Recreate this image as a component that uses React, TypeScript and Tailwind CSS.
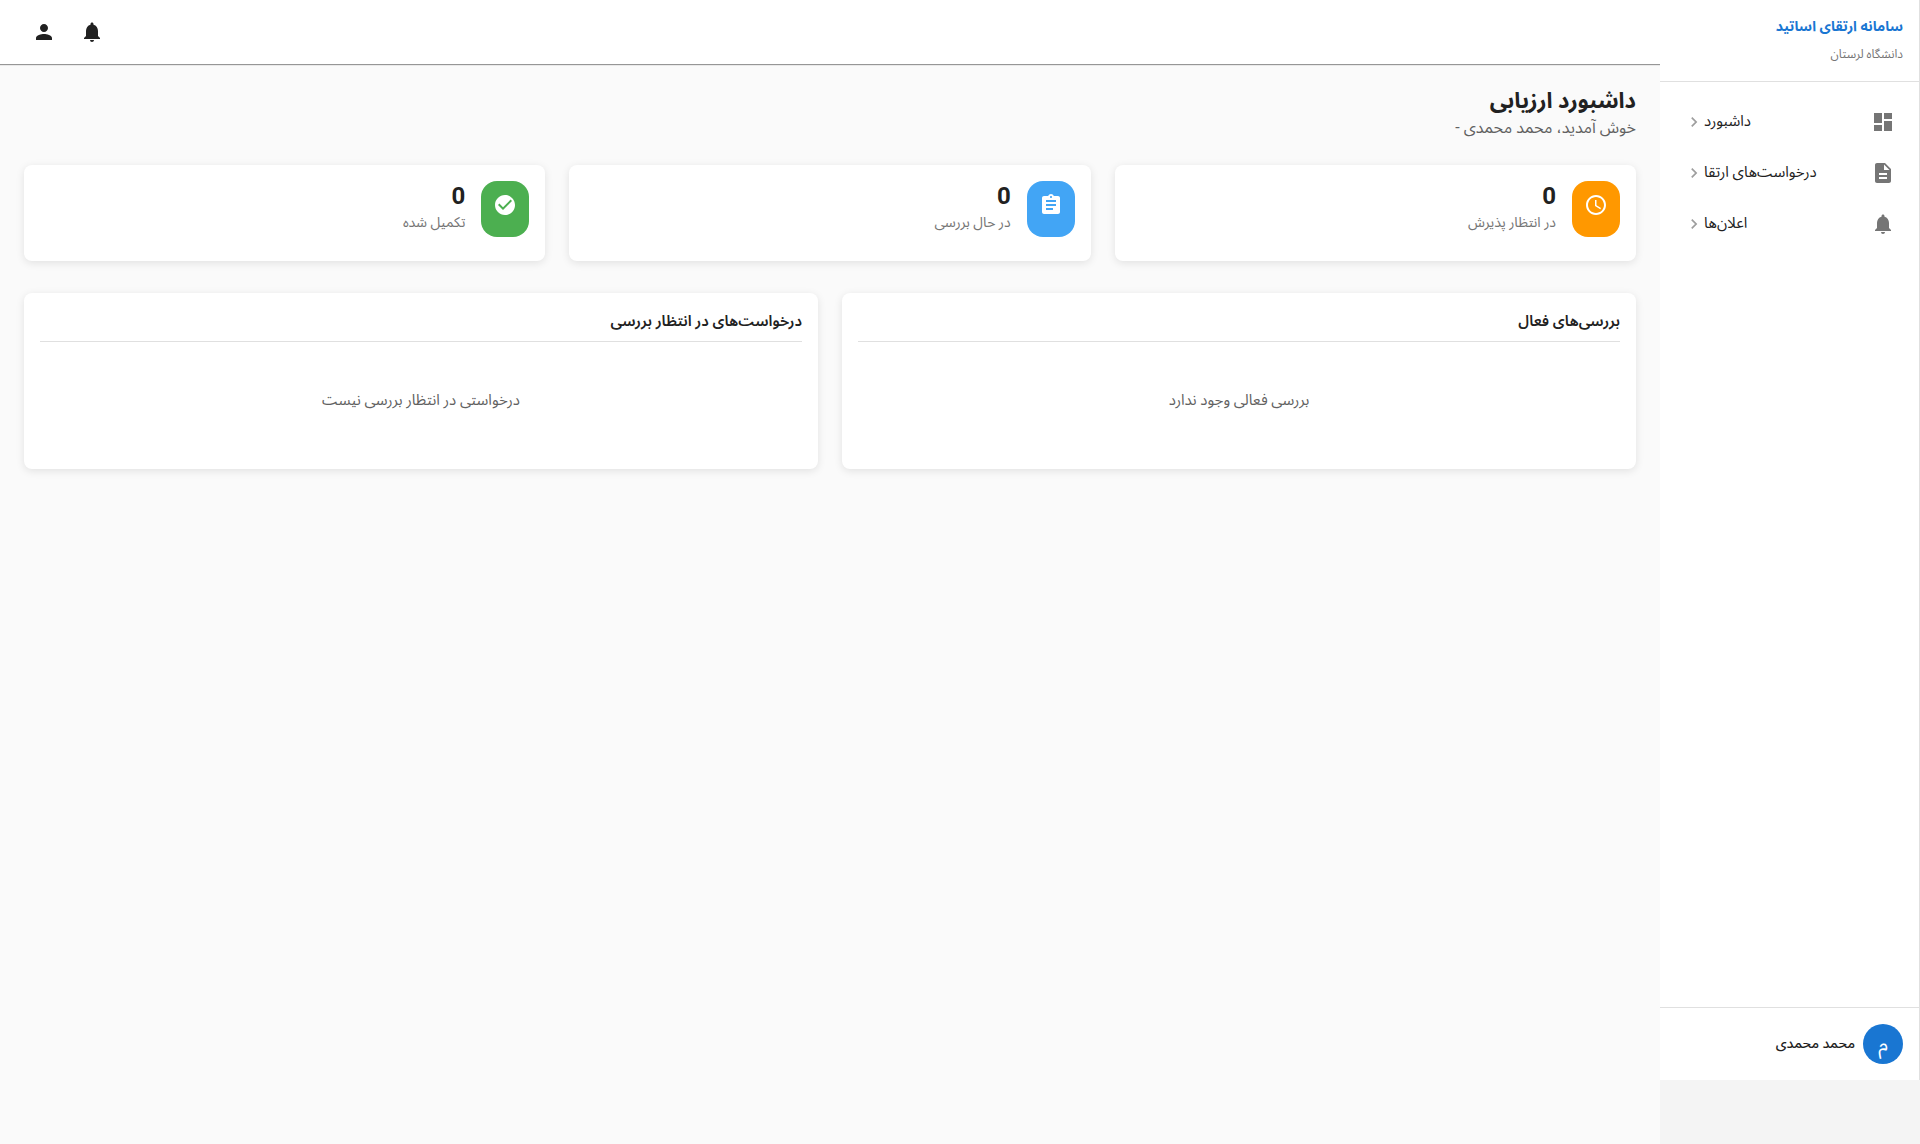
import React from "react";
import type { IconType } from "react-icons";
import {
  MdAccessTime,
  MdAssignment,
  MdCheckCircle,
  MdChevronRight,
  MdDashboard,
  MdDescription,
  MdNotifications,
  MdPerson,
} from "react-icons/md";

type NavItem = { label: string; icon: IconType };
type Stat = { label: string; value: number; icon: IconType; color: string };
type Panel = { title: string; empty: string };

const navItems: NavItem[] = [
  { label: "داشبورد", icon: MdDashboard },
  { label: "درخواست‌های ارتقا", icon: MdDescription },
  { label: "اعلان‌ها", icon: MdNotifications },
];

const stats: Stat[] = [
  { label: "در انتظار پذیرش", value: 0, icon: MdAccessTime, color: "bg-[#ff9800]" },
  { label: "در حال بررسی", value: 0, icon: MdAssignment, color: "bg-[#42a5f5]" },
  { label: "تکمیل شده", value: 0, icon: MdCheckCircle, color: "bg-[#4caf50]" },
];

const panels: Panel[] = [
  { title: "بررسی‌های فعال", empty: "بررسی فعالی وجود ندارد" },
  { title: "درخواست‌های در انتظار بررسی", empty: "درخواستی در انتظار بررسی نیست" },
];

const Sidebar = () => (
  <div className="z-20 flex w-[260px] shrink-0 flex-col pb-16">
    <aside className="flex grow flex-col border-r border-[#e0e0e0] bg-white">
      <div className="border-b border-[#e0e0e0] px-4 pt-[14px] pb-[19px]">
        <h2 className="text-sm leading-6 font-bold text-[#1976d2]">سامانه ارتقای اساتید</h2>
        <p className="mt-2 text-xs leading-4 text-[#757575]">دانشگاه لرستان</p>
      </div>

      <nav className="grow py-4">
        <ul className="space-y-[3px]">
          {navItems.map(({ label, icon: Icon }) => (
            <li key={label}>
              <a href="#" className="flex h-12 items-center justify-between px-6 text-[#212121]">
                <Icon className="size-6 text-[#757575]" />
                <span className="flex items-center text-[15px] leading-6">
                  <span className="pb-0.5">{label}</span>
                  <MdChevronRight className="size-5 text-[#9e9e9e]" />
                </span>
              </a>
            </li>
          ))}
        </ul>
      </nav>

      <div className="flex items-center gap-2 border-t border-[#e0e0e0] p-4">
        <div className="flex size-10 items-center justify-center rounded-full bg-[#1976d2] text-xl text-white">
          م
        </div>
        <span className="pb-0.5 text-sm font-medium text-[#212121]">محمد محمدی</span>
      </div>
    </aside>
  </div>
);

const Header = () => (
  <header className="z-10 flex h-16 items-center justify-end bg-white px-5 shadow-[0_1px_1px_rgba(0,0,0,0.4)]">
    <button type="button" aria-label="اعلان‌ها" className="p-3 text-[#212121]">
      <MdNotifications className="size-6" />
    </button>
    <button type="button" aria-label="حساب کاربری" className="p-3 text-[#212121]">
      <MdPerson className="size-6" />
    </button>
  </header>
);

const StatCard = ({ label, value, icon: Icon, color }: Stat) => (
  <div className="flex h-24 items-start gap-4 rounded-lg bg-white p-4 shadow-[0_2px_8px_rgba(0,0,0,0.1)]">
    <div className={`h-14 rounded-2xl p-3 text-white ${color}`}>
      <Icon className="size-6" />
    </div>
    <div className="pt-px">
      <div className="text-2xl leading-7 font-bold text-[#212121]">{value}</div>
      <div className="text-sm leading-6 text-[#757575]">{label}</div>
    </div>
  </div>
);

const App = () => {
  return (
    <div
      dir="rtl"
      className="flex min-h-screen bg-[#f4f4f4] font-['Roboto','Noto_Sans_Arabic','DejaVu_Sans',sans-serif]"
    >
      <Sidebar />
      <div className="flex min-w-0 grow flex-col bg-[#fafafa]">
        <Header />
        <main className="p-6">
          <h1 className="text-[22px] leading-[26px] font-bold text-[#212121]">داشبورد ارزیابی</h1>
          <p className="text-base leading-7 text-[#616161]">خوش آمدید، محمد محمدی -</p>

          {/* Stats */}
          <section className="mt-[23px] grid grid-cols-3 gap-6">
            {stats.map((stat) => (
              <StatCard key={stat.label} {...stat} />
            ))}
          </section>

          {/* Review lists */}
          <section className="mt-8 grid grid-cols-2 gap-6">
            {panels.map(({ title, empty }) => (
              <div key={title} className="rounded-lg bg-white p-4 shadow-[0_2px_8px_rgba(0,0,0,0.1)]">
                <h3 className="border-b border-[#e0e0e0] pb-2 text-[15px] leading-6 font-semibold text-[#212121]">
                  {title}
                </h3>
                <p className="pt-[46px] pb-[41px] text-center text-[15px] leading-6 text-[#616161]">{empty}</p>
              </div>
            ))}
          </section>
        </main>
      </div>
    </div>
  );
};

export default App;
